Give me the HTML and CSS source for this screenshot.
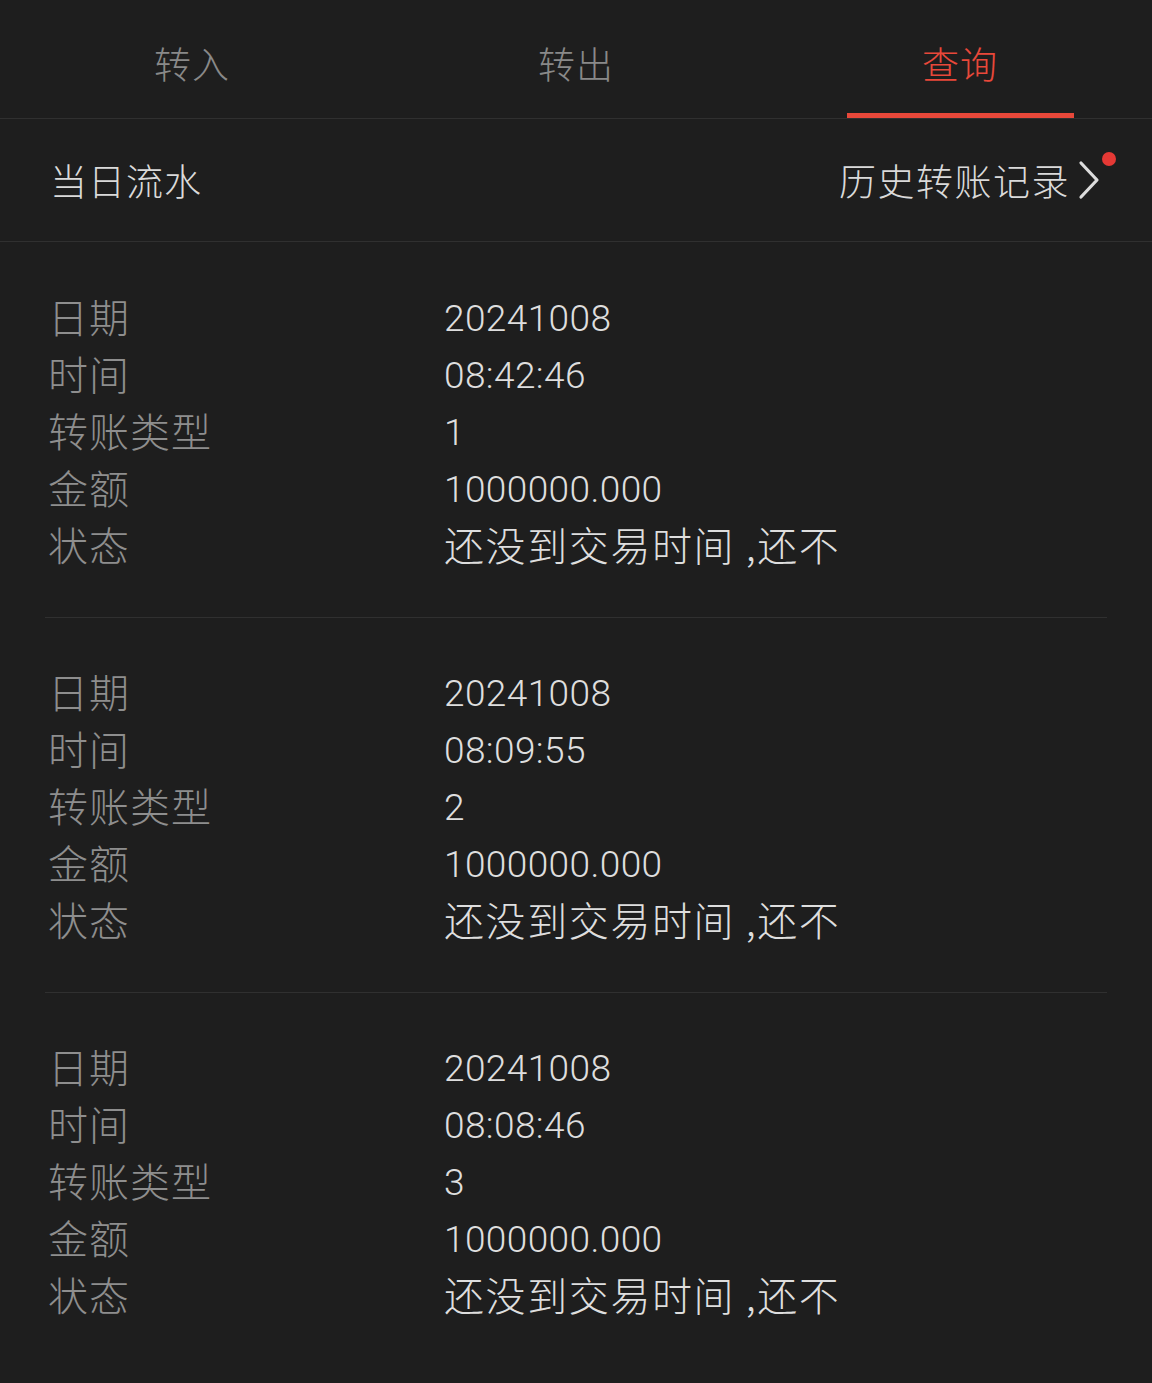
FILE: index.html
```html
<!DOCTYPE html>
<html lang="zh-CN">
<head>
    <meta charset="UTF-8">
    <meta name="viewport" content="width=device-width, initial-scale=1.0">
    <title>转账查询</title>
    <link rel="stylesheet" href="styles.css">
</head>
<body>
    <main class="page">
        <nav class="tabs">
            <div class="tab">转入</div>
            <div class="tab">转出</div>
            <div class="tab active">查询</div>
        </nav>

        <div class="section-header">
            <span class="section-title">当日流水</span>
            <a class="history-link" href="#">
                历史转账记录
                <svg class="chevron" width="22" height="40" viewBox="0 0 22 40">
                    <polyline points="3,3 19,20 3,37" fill="none" stroke="#dcdcdc" stroke-width="3.2" stroke-linecap="round" stroke-linejoin="round"/>
                </svg>
                <span class="badge-dot"></span>
            </a>
        </div>

        <div class="records">
            <div class="record">
                <div class="row"><span class="label">日期</span><span class="value num">20241008</span></div>
                <div class="row"><span class="label">时间</span><span class="value num">08:42:46</span></div>
                <div class="row"><span class="label">转账类型</span><span class="value num">1</span></div>
                <div class="row"><span class="label">金额</span><span class="value num">1000000.000</span></div>
                <div class="row"><span class="label">状态</span><span class="value">还没到交易时间 ,还不</span></div>
            </div>
            <div class="record">
                <div class="row"><span class="label">日期</span><span class="value num">20241008</span></div>
                <div class="row"><span class="label">时间</span><span class="value num">08:09:55</span></div>
                <div class="row"><span class="label">转账类型</span><span class="value num">2</span></div>
                <div class="row"><span class="label">金额</span><span class="value num">1000000.000</span></div>
                <div class="row"><span class="label">状态</span><span class="value">还没到交易时间 ,还不</span></div>
            </div>
            <div class="record">
                <div class="row"><span class="label">日期</span><span class="value num">20241008</span></div>
                <div class="row"><span class="label">时间</span><span class="value num">08:08:46</span></div>
                <div class="row"><span class="label">转账类型</span><span class="value num">3</span></div>
                <div class="row"><span class="label">金额</span><span class="value num">1000000.000</span></div>
                <div class="row"><span class="label">状态</span><span class="value">还没到交易时间 ,还不</span></div>
            </div>
        </div>
    </main>
</body>
</html>
```

FILE: styles.css
```css
* {
    margin: 0;
    padding: 0;
    box-sizing: border-box;
    font-family: "Noto Sans CJK SC", "Noto Sans", sans-serif;
}

html, body {
    width: 100%;
    min-height: 100%;
    background-color: #1e1e1e;
}

.page {
    width: 100%;
    min-height: 1383px;
}

/* top tabs */
.tabs {
    display: flex;
    height: 119px;
    border-bottom: 1px solid #303030;
}

.tab {
    flex: 1;
    display: flex;
    justify-content: center;
    align-items: center;
    padding-top: 8px;
    font-size: 37px;
    font-weight: 300;
    letter-spacing: 1px;
    color: #898989;
    position: relative;
}

.tab.active {
    color: #e8483a;
}

.tab.active::after {
    content: "";
    position: absolute;
    left: 50%;
    bottom: 0;
    width: 227px;
    height: 5px;
    margin-left: -113px;
    background-color: #e8483a;
}

/* today header */
.section-header {
    display: flex;
    justify-content: space-between;
    align-items: center;
    height: 123px;
    padding: 0 52px 0 50px;
    border-bottom: 1px solid #303030;
}

.section-title {
    font-size: 37px;
    font-weight: 300;
    letter-spacing: 1px;
    color: #dadada;
}

.history-link {
    display: flex;
    align-items: center;
    gap: 8px;
    font-size: 37px;
    font-weight: 300;
    letter-spacing: 1.5px;
    color: #dadada;
    text-decoration: none;
    position: relative;
}

.chevron {
    display: block;
}

.badge-dot {
    position: absolute;
    right: -16px;
    top: -1px;
    width: 14px;
    height: 14px;
    border-radius: 50%;
    background-color: #e53935;
}

/* records */
.records {
    padding: 0 45px;
}

.record {
    padding: 48px 0 42px;
    border-bottom: 1px solid #303030;
}

.record + .record {
    padding-top: 47px;
}

.record:last-child {
    border-bottom: none;
}

.row {
    display: flex;
    align-items: center;
    height: 57px;
}

.label {
    width: 399px;
    padding-left: 3px;
    padding-bottom: 5px;
    font-size: 40px;
    font-weight: 300;
    letter-spacing: 1px;
    color: #8e8e8e;
}

.value {
    padding-bottom: 5px;
    font-size: 40px;
    font-weight: 300;
    letter-spacing: 1.6px;
    color: #dedede;
}

.value.num {
    padding-bottom: 0;
    font-family: Roboto, "Noto Sans", sans-serif;
    font-size: 37px;
    letter-spacing: 0.4px;
}
```
